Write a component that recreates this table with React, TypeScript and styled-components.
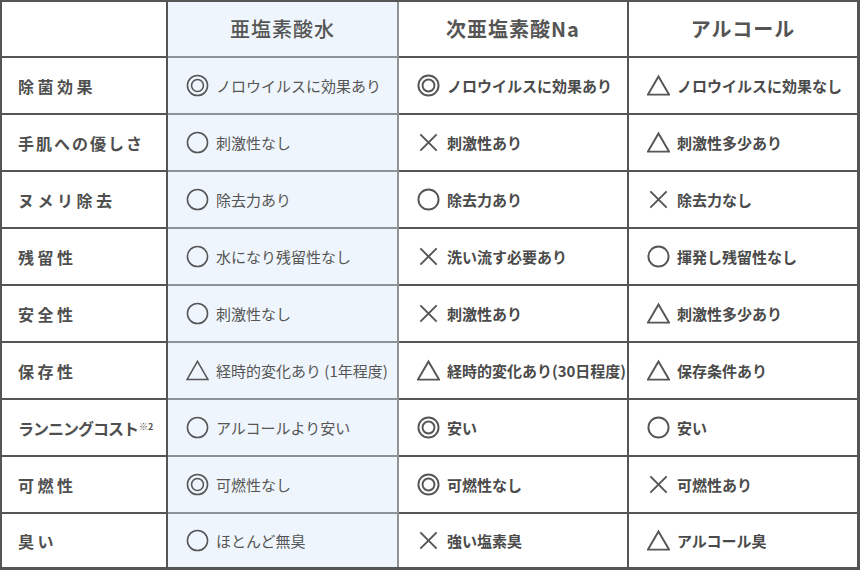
import React from "react";
import styled, { createGlobalStyle } from "styled-components";

const GlobalStyle = createGlobalStyle`
  html, body { margin: 0; padding: 0; background: #ffffff; }
  body { font-family: "Noto Sans CJK JP", "Noto Sans", sans-serif; color: #555; }
  * { box-sizing: border-box; }
`;

type Mark = "dbl" | "circ" | "x" | "tri";
type Entry = [Mark, string];
type RowData = { label: string; note?: string; spacing?: number; cells: [Entry, Entry, Entry] };

const rows: RowData[] = [
  { label: "除菌効果", cells: [["dbl", "ノロウイルスに効果あり"], ["dbl", "ノロウイルスに効果あり"], ["tri", "ノロウイルスに効果なし"]] },
  { label: "手肌への優しさ", spacing: 2, cells: [["circ", "刺激性なし"], ["x", "刺激性あり"], ["tri", "刺激性多少あり"]] },
  { label: "ヌメリ除去", cells: [["circ", "除去力あり"], ["circ", "除去力あり"], ["x", "除去力なし"]] },
  { label: "残留性", cells: [["circ", "水になり残留性なし"], ["x", "洗い流す必要あり"], ["circ", "揮発し残留性なし"]] },
  { label: "安全性", cells: [["circ", "刺激性なし"], ["x", "刺激性あり"], ["tri", "刺激性多少あり"]] },
  { label: "保存性", cells: [["tri", "経時的変化あり (1年程度)"], ["tri", "経時的変化あり(30日程度)"], ["tri", "保存条件あり"]] },
  { label: "ランニングコスト", note: "※2", spacing: -1, cells: [["circ", "アルコールより安い"], ["dbl", "安い"], ["circ", "安い"]] },
  { label: "可燃性", cells: [["dbl", "可燃性なし"], ["dbl", "可燃性なし"], ["x", "可燃性あり"]] },
  { label: "臭い", cells: [["circ", "ほとんど無臭"], ["x", "強い塩素臭"], ["tri", "アルコール臭"]] },
];

const Table = styled.div`
  width: 860px;
  height: 570px;
  border-style: solid;
  border-color: #555;
  border-width: 2px 3px 3px 2px;
  display: flex;
  flex-direction: column;
  background: #fff;
`;

const Row = styled.div<{ $head?: boolean }>`
  display: grid;
  grid-template-columns: 166px 231px 230px 228px;
  height: ${(p) => (p.$head ? "56px" : "57px")};
  &:last-child { height: 53px; }
  &:last-child > * { border-bottom: none; }
`;

const Cell = styled.div<{ $blue?: boolean }>`
  display: flex;
  align-items: center;
  border-right: 2px solid ${(p) => (p.$blue ? "#8d9297" : "#555")};
  border-bottom: 2px solid ${(p) => (p.$blue ? "#8d9297" : "#555")};
  background: ${(p) => (p.$blue ? "#eff5fc" : "#fff")};
  &:last-child { border-right: none; }
`;

const HeadCell = styled(Cell)<{ $light?: boolean }>`
  justify-content: center;
  font-size: 20px;
  font-weight: ${(p) => (p.$light ? 500 : 700)};
  letter-spacing: 1px;
  color: #555;
  padding-bottom: 2px;
`;

const LabelCell = styled(Cell)`
  padding-left: 16px;
`;

const Label = styled.span<{ $spacing: number }>`
  font-size: 16px;
  font-weight: 700;
  letter-spacing: ${(p) => p.$spacing}px;
  color: #4f4f4f;
  white-space: nowrap;
`;

const Note = styled.sup`
  font-size: 9px;
  font-weight: 700;
  letter-spacing: 0;
  vertical-align: 5px;
  margin-left: 1px;
`;

const ValueCell = styled(Cell)`
  padding-left: 18px;
  gap: 7px;
`;

const ValueText = styled.span<{ $bold?: boolean }>`
  font-size: 15px;
  font-weight: ${(p) => (p.$bold ? 700 : 400)};
  color: ${(p) => (p.$bold ? "#4a4a4a" : "#555")};
  white-space: nowrap;
`;

const MarkSvg = styled.svg`
  flex: none;
  width: 23px;
  height: 23px;
`;

function MarkIcon({ kind, bold }: { kind: Mark; bold?: boolean }) {
  const sw = bold ? 2 : 1.6;
  return (
    <MarkSvg viewBox="0 0 24 24" fill="none" stroke="#555" strokeWidth={sw}>
      {kind === "dbl" && (
        <>
          <circle cx="12" cy="12" r="10.5" />
          <circle cx="12" cy="12" r="6.2" />
        </>
      )}
      {kind === "circ" && <circle cx="12" cy="12" r="10.5" />}
      {kind === "x" && (
        <>
          <line x1="3.5" y1="3.5" x2="20.5" y2="20.5" />
          <line x1="20.5" y1="3.5" x2="3.5" y2="20.5" />
        </>
      )}
      {kind === "tri" && <polygon points="12,2.5 23,21.5 1,21.5" strokeLinejoin="miter" />}
    </MarkSvg>
  );
}

function Value({ entry, blue }: { entry: Entry; blue?: boolean }) {
  return (
    <ValueCell $blue={blue}>
      <MarkIcon kind={entry[0]} bold={!blue} />
      <ValueText $bold={!blue}>{entry[1]}</ValueText>
    </ValueCell>
  );
}

export default function App() {
  return (
    <>
      <GlobalStyle />
      <Table>
        <Row $head>
          <HeadCell />
          <HeadCell $blue $light>亜塩素酸水</HeadCell>
          <HeadCell>次亜塩素酸Na</HeadCell>
          <HeadCell>アルコール</HeadCell>
        </Row>
        {rows.map((r) => (
          <Row key={r.label}>
            <LabelCell>
              <Label $spacing={r.spacing ?? 3.5}>
                {r.label}
                {r.note && <Note>{r.note}</Note>}
              </Label>
            </LabelCell>
            <Value entry={r.cells[0]} blue />
            <Value entry={r.cells[1]} />
            <Value entry={r.cells[2]} />
          </Row>
        ))}
      </Table>
    </>
  );
}
